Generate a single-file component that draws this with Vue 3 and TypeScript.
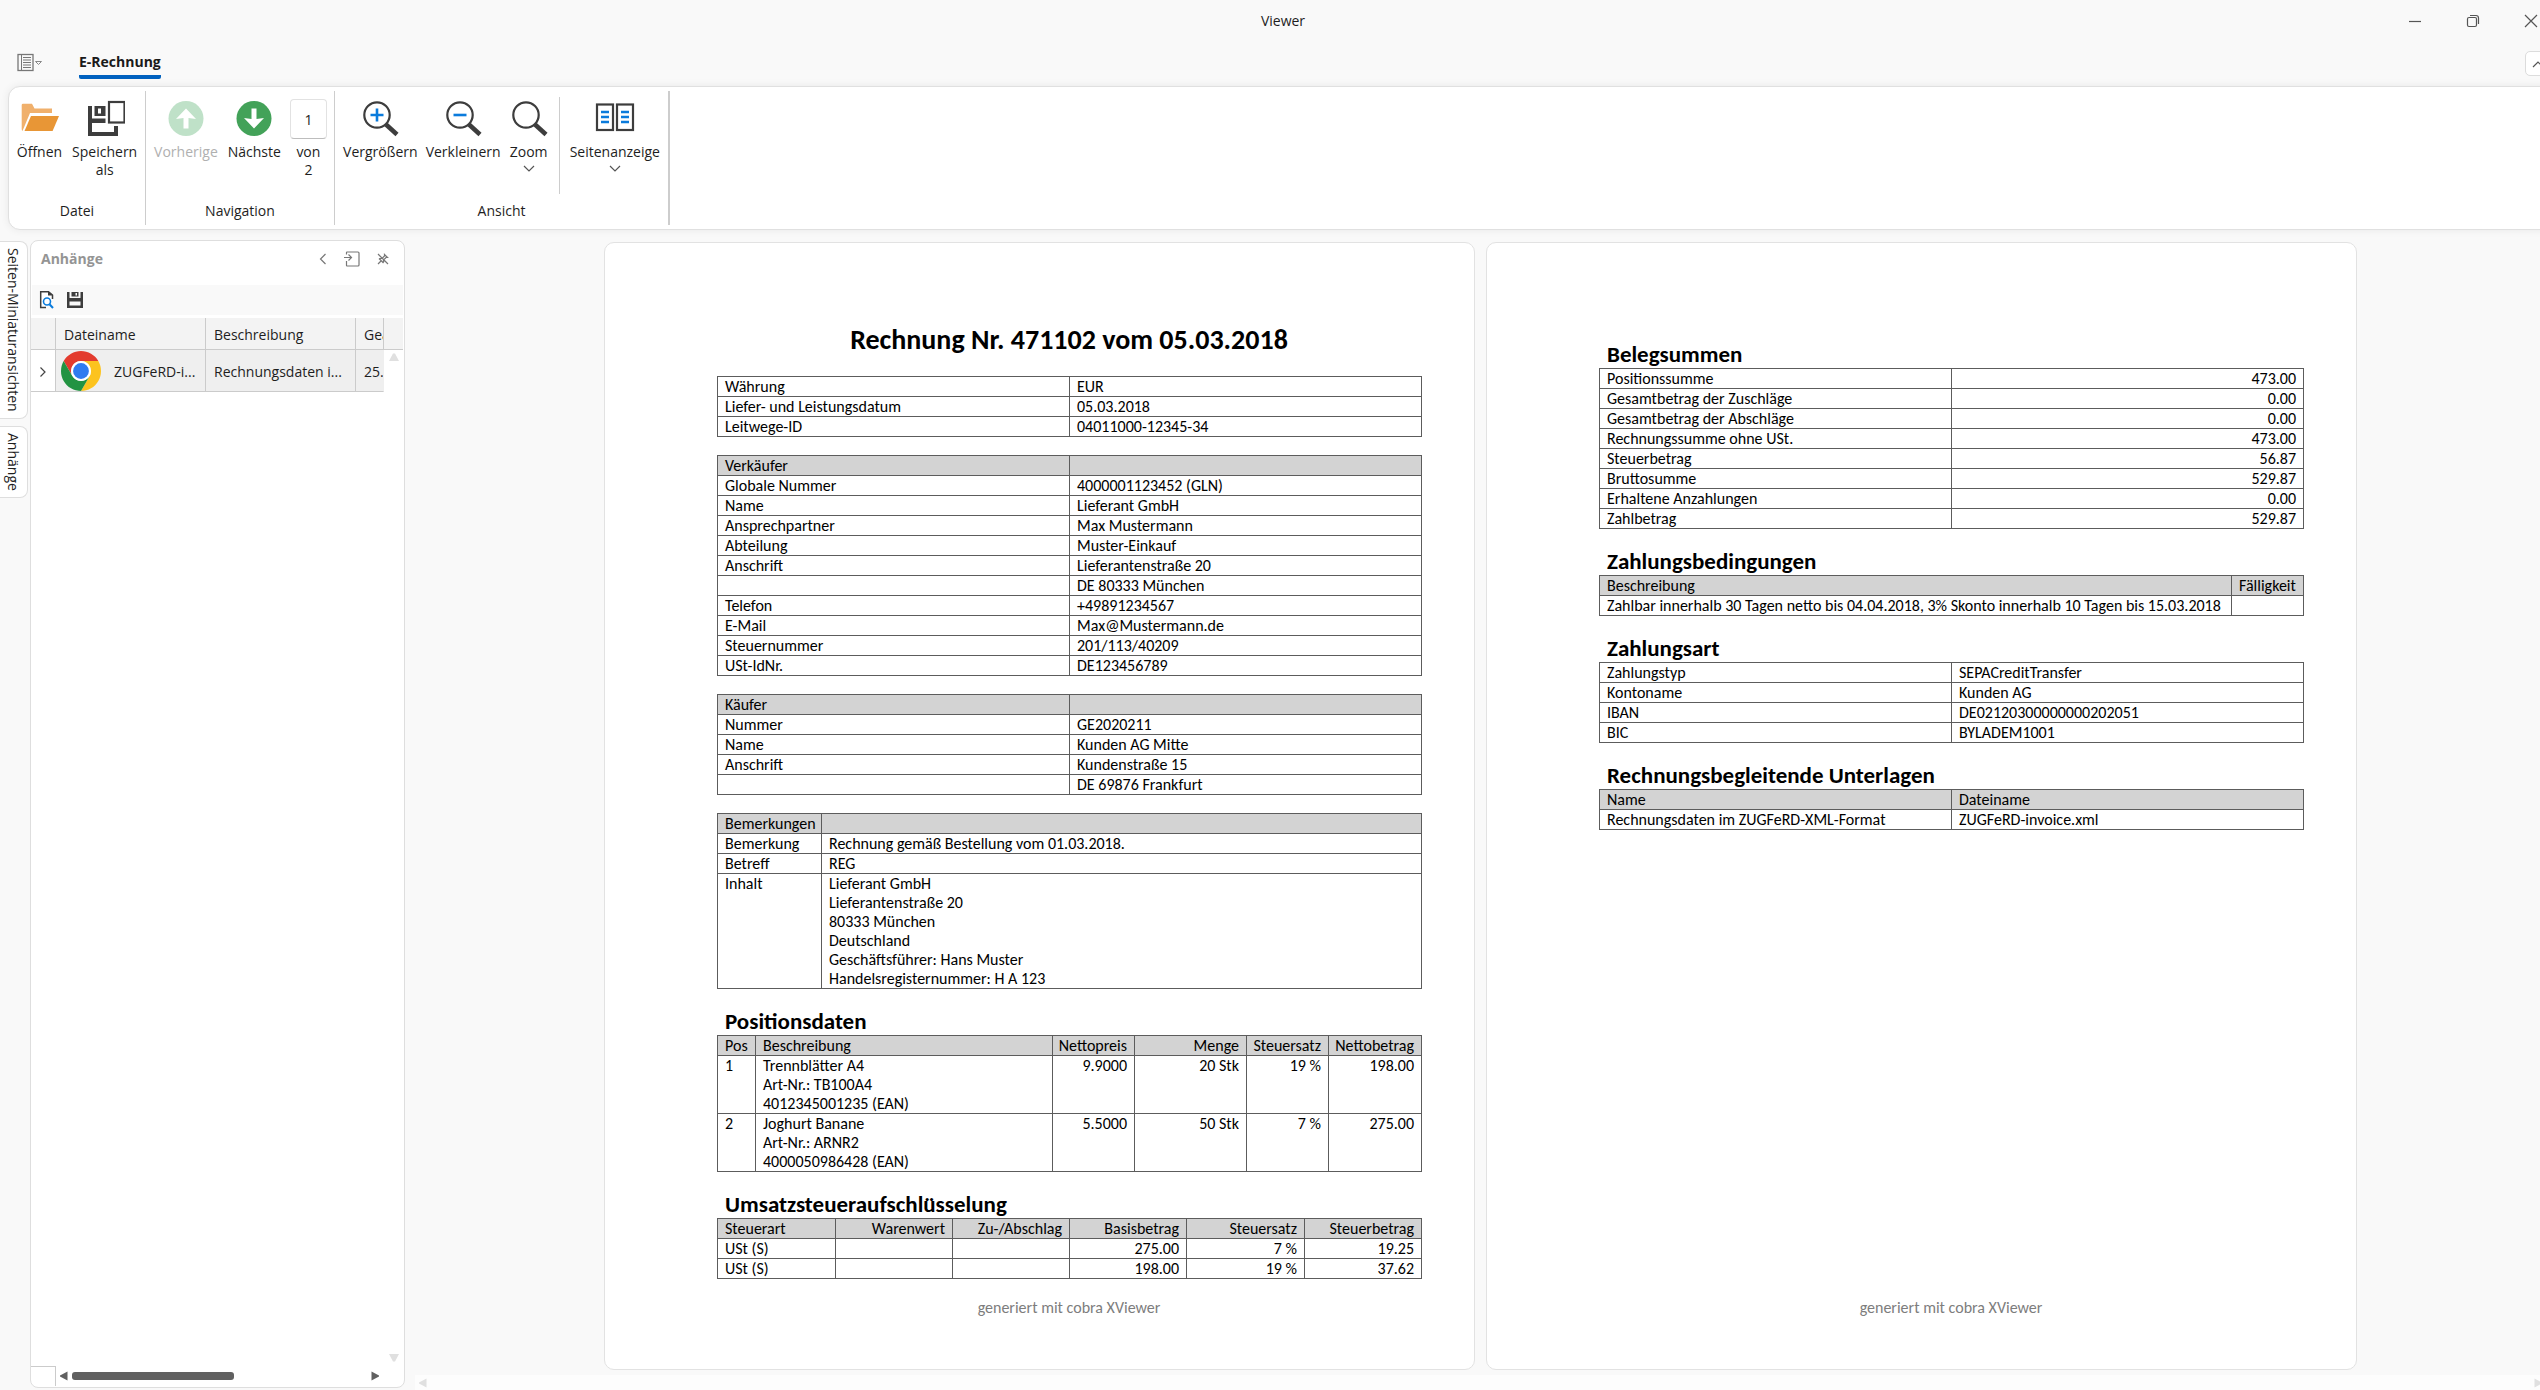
<script setup lang="ts">
import { ref } from 'vue'

interface Block {
  title?: string
  cols: number[]
  head?: string[]
  rows: string[][]
  right?: number[]
}

const pageNumber = ref('1')

const pageOne: Block[] = [
  {
    cols: [352, 352],
    rows: [
      ['Währung', 'EUR'],
      ['Liefer- und Leistungsdatum', '05.03.2018'],
      ['Leitwege-ID', '04011000-12345-34'],
    ],
  },
  {
    cols: [352, 352],
    head: ['Verkäufer', ''],
    rows: [
      ['Globale Nummer', '4000001123452 (GLN)'],
      ['Name', 'Lieferant GmbH'],
      ['Ansprechpartner', 'Max Mustermann'],
      ['Abteilung', 'Muster-Einkauf'],
      ['Anschrift', 'Lieferantenstraße 20'],
      ['', 'DE 80333 München'],
      ['Telefon', '+49891234567'],
      ['E-Mail', 'Max@Mustermann.de'],
      ['Steuernummer', '201/113/40209'],
      ['USt-IdNr.', 'DE123456789'],
    ],
  },
  {
    cols: [352, 352],
    head: ['Käufer', ''],
    rows: [
      ['Nummer', 'GE2020211'],
      ['Name', 'Kunden AG Mitte'],
      ['Anschrift', 'Kundenstraße 15'],
      ['', 'DE 69876 Frankfurt'],
    ],
  },
  {
    cols: [104, 600],
    head: ['Bemerkungen', ''],
    rows: [
      ['Bemerkung', 'Rechnung gemäß Bestellung vom 01.03.2018.'],
      ['Betreff', 'REG'],
      [
        'Inhalt',
        'Lieferant GmbH\nLieferantenstraße 20\n80333 München\nDeutschland\nGeschäftsführer: Hans Muster\nHandelsregisternummer: H A 123',
      ],
    ],
  },
  {
    title: 'Positionsdaten',
    cols: [38, 297, 82, 112, 82, 93],
    head: ['Pos', 'Beschreibung', 'Nettopreis', 'Menge', 'Steuersatz', 'Nettobetrag'],
    rows: [
      ['1', 'Trennblätter A4\nArt-Nr.: TB100A4\n4012345001235 (EAN)', '9.9000', '20 Stk', '19 %', '198.00'],
      ['2', 'Joghurt Banane\nArt-Nr.: ARNR2\n4000050986428 (EAN)', '5.5000', '50 Stk', '7 %', '275.00'],
    ],
    right: [2, 3, 4, 5],
  },
  {
    title: 'Umsatzsteueraufschlüsselung',
    cols: [118, 117, 117, 117, 118, 117],
    head: ['Steuerart', 'Warenwert', 'Zu-/Abschlag', 'Basisbetrag', 'Steuersatz', 'Steuerbetrag'],
    rows: [
      ['USt (S)', '', '', '275.00', '7 %', '19.25'],
      ['USt (S)', '', '', '198.00', '19 %', '37.62'],
    ],
    right: [1, 2, 3, 4, 5],
  },
]

const pageTwo: Block[] = [
  {
    title: 'Belegsummen',
    cols: [352, 352],
    rows: [
      ['Positionssumme', '473.00'],
      ['Gesamtbetrag der Zuschläge', '0.00'],
      ['Gesamtbetrag der Abschläge', '0.00'],
      ['Rechnungssumme ohne USt.', '473.00'],
      ['Steuerbetrag', '56.87'],
      ['Bruttosumme', '529.87'],
      ['Erhaltene Anzahlungen', '0.00'],
      ['Zahlbetrag', '529.87'],
    ],
    right: [1],
  },
  {
    title: 'Zahlungsbedingungen',
    cols: [632, 72],
    head: ['Beschreibung', 'Fälligkeit'],
    rows: [['Zahlbar innerhalb 30 Tagen netto bis 04.04.2018, 3% Skonto innerhalb 10 Tagen bis 15.03.2018', '']],
  },
  {
    title: 'Zahlungsart',
    cols: [352, 352],
    rows: [
      ['Zahlungstyp', 'SEPACreditTransfer'],
      ['Kontoname', 'Kunden AG'],
      ['IBAN', 'DE02120300000000202051'],
      ['BIC', 'BYLADEM1001'],
    ],
  },
  {
    title: 'Rechnungsbegleitende Unterlagen',
    cols: [352, 352],
    head: ['Name', 'Dateiname'],
    rows: [['Rechnungsdaten im ZUGFeRD-XML-Format', 'ZUGFeRD-invoice.xml']],
  },
]

const pages: { title?: string; blocks: Block[] }[] = [
  { title: 'Rechnung Nr. 471102 vom 05.03.2018', blocks: pageOne },
  { blocks: pageTwo },
]
</script>

<template>
  <div class="app">
    <header class="titlebar">
      <span class="wintitle">Viewer</span>
      <div class="winbuttons">
        <button type="button" aria-label="Minimieren">
          <svg width="14" height="14" viewBox="0 0 14 14"><path d="M1 7.5H13" class="win" /></svg>
        </button>
        <button type="button" aria-label="Wiederherstellen">
          <svg width="14" height="14" viewBox="0 0 14 14">
            <rect x="1.5" y="3.5" width="9" height="9" rx="1.5" class="win" />
            <path d="M4 1.5H10Q12.500 1.500 12.500 4V10" class="win" />
          </svg>
        </button>
        <button type="button" aria-label="Schließen">
          <svg width="14" height="14" viewBox="0 0 14 14"><path d="M1 1L13 13M13 1L1 13" class="win" /></svg>
        </button>
      </div>
    </header>

    <nav class="tabbar">
      <button type="button" class="filemenu" aria-label="Menü">
        <svg width="26" height="20" viewBox="0 0 26 20">
          <rect x="1" y="1.500" width="15" height="16" fill="none" stroke="#777" stroke-width="1.300" />
          <path d="M4.500 2V17" stroke="#777" fill="none" />
          <path d="M6 4.500H14M6 7H14M6 9.500H14M6 12H14M6 14.500H14" stroke="#777" fill="none" />
          <path d="M18.500 8.500H24.500L21.500 11.500Z" stroke="#888" fill="none" />
        </svg>
      </button>
      <a href="#" class="tab">E-Rechnung</a>
      <button type="button" class="collapse" aria-label="Menüband reduzieren">
        <svg width="12" height="8" viewBox="0 0 12 8"><path d="M1 7L6 2L11 7" class="win" /></svg>
      </button>
    </nav>

    <section class="ribbon">
      <div class="group datei">
        <div class="items">
          <button type="button" class="item">
            <svg width="40" height="40" viewBox="0 0 40 40">
              <path d="M2.700 6Q2.700 4.700 4 4.700H13L15.500 9.500H33V14H11L3.500 32Q2.700 31.500 2.700 30Z" fill="#f0b06c" />
              <path d="M12 17H40L33.600 32H5.500Z" fill="#e89636" />
            </svg>
            <span>Öffnen</span>
          </button>
          <button type="button" class="item">
            <svg width="40" height="40" viewBox="0 0 40 40">
              <path d="M3 7H7V33H29V27H33V37H3Z" fill="#3d3d3d" />
              <path d="M9.500 7H20.500V17H9.500ZM13 9.500V14.500H16V9.500Z" fill="#3d3d3d" fill-rule="evenodd" />
              <rect x="3" y="19.500" width="17.500" height="4.500" fill="#3d3d3d" />
              <rect x="24" y="3" width="15.500" height="20.500" fill="#fff" stroke="#3d3d3d" stroke-width="2.200" />
            </svg>
            <span>Speichern<br />als</span>
          </button>
        </div>
        <span class="caption">Datei</span>
      </div>

      <div class="group navi">
        <div class="items">
          <button type="button" class="item" disabled>
            <svg width="40" height="40" viewBox="0 0 40 40">
              <circle cx="20" cy="19.500" r="17.500" fill="#bfe1c8" />
              <path d="M17.500 29.500H22.500V19L30 20L20 9.500L10 20L17.500 19Z" fill="#fff" />
            </svg>
            <span>Vorherige</span>
          </button>
          <button type="button" class="item">
            <svg width="40" height="40" viewBox="0 0 40 40">
              <circle cx="20" cy="19.500" r="17.500" fill="#43a259" />
              <path d="M17.500 9.500H22.500V20L30 19L20 29.500L10 19L17.500 20Z" fill="#fff" />
            </svg>
            <span>Nächste</span>
          </button>
          <label class="item pagebox">
            <input v-model="pageNumber" type="text" />
            <span>von<br />2</span>
          </label>
        </div>
        <span class="caption">Navigation</span>
      </div>

      <div class="group ansicht">
        <div class="items">
          <button type="button" class="item">
            <svg width="40" height="40" viewBox="0 0 40 40">
              <path d="M26 25.500L37 35.500" stroke="#3d3d3d" stroke-width="4.500" />
              <circle cx="17" cy="16" r="12.700" fill="#fff" stroke="#3d3d3d" stroke-width="2.200" />
              <path d="M10.500 16H23.500M17 9.500V22.500" stroke="#0a7bdc" stroke-width="2.600" />
            </svg>
            <span>Vergrößern</span>
          </button>
          <button type="button" class="item">
            <svg width="40" height="40" viewBox="0 0 40 40">
              <path d="M26 25.500L37 35.500" stroke="#3d3d3d" stroke-width="4.500" />
              <circle cx="17" cy="16" r="12.700" fill="#fff" stroke="#3d3d3d" stroke-width="2.200" />
              <path d="M10.500 16H23.500" stroke="#0a7bdc" stroke-width="2.600" />
            </svg>
            <span>Verkleinern</span>
          </button>
          <button type="button" class="item">
            <svg width="40" height="40" viewBox="0 0 40 40">
              <path d="M26 25.500L37 35.500" stroke="#3d3d3d" stroke-width="4.500" />
              <circle cx="17" cy="16" r="12.700" fill="#fff" stroke="#3d3d3d" stroke-width="2.200" />
            </svg>
            <span>Zoom</span>
            <svg width="12" height="18" viewBox="0 0 12 18"><path d="M1 5L6 10L11 5" class="win" /></svg>
          </button>
          <span class="divider"></span>
          <button type="button" class="item">
            <svg width="40" height="40" viewBox="0 0 40 40">
              <rect x="2" y="5.500" width="16" height="25.500" fill="none" stroke="#3d3d3d" stroke-width="2.200" />
              <rect x="22" y="5.500" width="16" height="25.500" fill="none" stroke="#3d3d3d" stroke-width="2.200" />
              <path d="M6 13H14M6 18H14M6 23H14M26 13H34M26 18H34M26 23H34" stroke="#0a7bdc" stroke-width="2.400" />
            </svg>
            <span>Seitenanzeige</span>
            <svg width="12" height="18" viewBox="0 0 12 18"><path d="M1 5L6 10L11 5" class="win" /></svg>
          </button>
        </div>
        <span class="caption">Ansicht</span>
      </div>
    </section>

    <main class="body">
      <div class="sidetabs">
        <button type="button">Seiten-Miniaturansichten</button>
        <button type="button">Anhänge</button>
      </div>

      <aside class="panel">
        <div class="panelhead">
          <h2>Anhänge</h2>
          <button type="button" aria-label="Zurück">
            <svg width="8" height="12" viewBox="0 0 8 12"><path d="M6.500 1L1.500 6L6.500 11" class="soft" /></svg>
          </button>
          <button type="button" aria-label="Andocken">
            <svg width="16" height="16" viewBox="0 0 16 16">
              <path d="M2.500 3.500V1.500Q2.500 1 3 1H14Q15 1 15 2V14Q15 15 14 15H3Q2.500 15 2.500 14.500V10" class="soft" />
              <path d="M0 6.500H7.500M4.500 3.500L7.500 6.500L4.500 9.500" class="soft" />
            </svg>
          </button>
          <button type="button" aria-label="Lösen">
            <svg width="12" height="12" viewBox="0 0 12 12">
              <path d="M1 1L11 11M1 11L4 8M2 5.500L6.500 10M2.500 5.500H5L7.500 3V1.500L10.500 4.500H9L6.500 7V9.500" class="soft" />
            </svg>
          </button>
        </div>

        <div class="paneltools">
          <button type="button" aria-label="Vorschau">
            <svg width="16" height="20" viewBox="0 0 16 20">
              <path d="M13.500 9V5L9.500 1.700H1.700V17.500H7" fill="#fff" stroke="#3d3d3d" stroke-width="1.500" />
              <path d="M9 1V5.500H14Z" fill="#3d3d3d" />
              <circle cx="8" cy="11.500" r="3.500" fill="#fff" stroke="#0a7bdc" stroke-width="1.600" />
              <path d="M10.500 14.200L14 18" stroke="#0a7bdc" stroke-width="2" />
            </svg>
          </button>
          <button type="button" aria-label="Speichern">
            <svg width="16" height="16" viewBox="0 0 16 16">
              <path d="M0 0H2.500V6H13.500V0H16V16H0ZM2.500 9.500V13.500H13.500V9.500Z" fill="#3d3d3d" fill-rule="evenodd" />
              <path d="M4.500 0H11.500V4.500H4.500ZM8.500 1V3.500H10V1Z" fill="#3d3d3d" fill-rule="evenodd" />
            </svg>
          </button>
        </div>

        <div class="grid">
          <div class="gridclip">
            <table>
              <colgroup><col class="c1" /><col class="c2" /><col class="c2" /><col class="c3" /></colgroup>
              <thead>
                <tr><th></th><th scope="col">Dateiname</th><th scope="col">Beschreibung</th><th scope="col">Geändert</th></tr>
              </thead>
              <tbody>
                <tr>
                  <td class="expand">
                    <svg width="6" height="10" viewBox="0 0 6 10"><path d="M.5 .5L5 5L.5 9.500" fill="none" stroke="#444" stroke-width="1.200" /></svg>
                  </td>
                  <td>
                    <span class="file">
                      <svg width="40" height="40" viewBox="0 0 48 48">
                        <path d="M3.220 12A24 24 0 0 1 44.780 12H24A12 12 0 0 0 13.610 30Z" fill="#e33b2e" />
                        <path d="M44.780 12A24 24 0 0 1 24 48L34.390 30A12 12 0 0 0 24 12Z" fill="#fcc31e" />
                        <path d="M24 48A24 24 0 0 1 3.220 12L13.610 30A12 12 0 0 0 34.390 30Z" fill="#229342" />
                        <circle cx="24" cy="24" r="12" fill="#fff" />
                        <circle cx="24" cy="24" r="9.500" fill="#2f7bf0" />
                      </svg>
                      <span>ZUGFeRD-i...</span>
                    </span>
                  </td>
                  <td>Rechnungsdaten i...</td>
                  <td class="cut">25.</td>
                </tr>
              </tbody>
            </table>
          </div>
          <div class="vscroll">
            <span class="corner"></span>
            <svg width="10" height="8" viewBox="0 0 10 8"><path d="M0 8L4 .5H6L10 8Z" fill="#e0e0e0" /></svg>
            <svg class="down" width="10" height="8" viewBox="0 0 10 8"><path d="M0 0L4 7.500H6L10 0Z" fill="#e0e0e0" /></svg>
          </div>
        </div>

        <div class="hscroll">
          <span class="box"></span>
          <svg width="8" height="10" viewBox="0 0 8 10"><path d="M7.500 .5V9.500L0 5.500V4.500Z" fill="#606060" /></svg>
          <span class="thumb"></span>
          <svg class="end" width="8" height="10" viewBox="0 0 8 10"><path d="M.5 .5V9.500L8 5.500V4.500Z" fill="#606060" /></svg>
        </div>
      </aside>

      <div class="viewer">
        <div class="pages">
          <article v-for="(page, p) in pages" :key="p" class="page">
            <h1 v-if="page.title">{{ page.title }}</h1>
            <template v-for="(block, b) in page.blocks" :key="b">
              <h3 v-if="block.title">{{ block.title }}</h3>
              <div v-else-if="b > 0" class="space"></div>
              <table class="doc">
                <colgroup><col v-for="(w, c) in block.cols" :key="c" :style="{ width: w + 'px' }" /></colgroup>
                <thead v-if="block.head">
                  <tr>
                    <th v-for="(cell, c) in block.head" :key="c" scope="col" :class="{ right: block.right?.includes(c) }">{{ cell }}</th>
                  </tr>
                </thead>
                <tbody>
                  <tr v-for="(row, r) in block.rows" :key="r">
                    <td v-for="(cell, c) in row" :key="c" :class="{ right: block.right?.includes(c) }">{{ cell }}</td>
                  </tr>
                </tbody>
              </table>
            </template>
            <footer>generiert mit cobra XViewer</footer>
          </article>
        </div>
        <div class="mainscroll">
          <svg width="8" height="10" viewBox="0 0 8 10"><path d="M7.500 .5V9.500L0 5.500V4.500Z" fill="#e0e0e0" /></svg>
          <svg width="8" height="10" viewBox="0 0 8 10"><path d="M.5 .5V9.500L8 5.500V4.500Z" fill="#e0e0e0" /></svg>
        </div>
      </div>
    </main>
  </div>
</template>

<style>
body {
  margin: 0;
  overflow: hidden;
  background: #f9f9f9;
}
</style>

<style scoped>
.app {
  display: flex;
  flex-direction: column;
  box-sizing: border-box;
  width: calc(100% + 26px);
  height: 100vh;
  background: #f9f9f9;
  color: #1e1e1e;
  font: 14px/18px "Open Sans", "Noto Sans", sans-serif;
}
button {
  padding: 0;
  border: 0;
  background: none;
  color: inherit;
  font: inherit;
}
svg {
  display: block;
  flex: none;
}
.win {
  fill: none;
  stroke: #555;
  stroke-width: 1.2;
}
.soft {
  fill: none;
  stroke: #777;
  stroke-width: 1.2;
}

.titlebar {
  display: grid;
  grid-template-columns: 1fr auto 1fr;
  align-items: center;
  height: 41px;
}
.wintitle {
  grid-column: 2;
}
.winbuttons {
  display: flex;
  justify-content: flex-end;
  padding-right: 6px;
}
.winbuttons button {
  display: flex;
  align-items: center;
  justify-content: center;
  width: 58px;
  height: 40px;
}

.tabbar {
  display: flex;
  align-items: flex-start;
  height: 44px;
}
.filemenu {
  margin: 12px 36px 0 17px;
}
.tab {
  padding: 11px 0 3px;
  border-bottom: 4px solid #0061bf;
  border-radius: 2px;
  color: #1a1a1a;
  font-weight: 700;
  line-height: 20px;
  text-decoration: none;
}
.collapse {
  display: flex;
  align-items: center;
  justify-content: center;
  width: 25px;
  height: 25px;
  margin: 10px 16px 0 auto;
  border: 1px solid #dcdcdc;
  border-radius: 5px;
  background: #fff;
}

.ribbon {
  display: flex;
  height: 142px;
  margin: 1px 0 0 8px;
  border: 1px solid #e0e0e0;
  border-radius: 12px;
  background: #fff;
  box-shadow: 0 0 8px rgba(0, 0, 0, 0.07);
}
.group {
  display: flex;
  flex-direction: column;
  align-items: center;
  justify-content: space-between;
  box-sizing: border-box;
  height: 134px;
  margin-top: 4px;
  padding: 8px 0 5px;
  border-right: 1px solid #cdcdcd;
}
.datei {
  width: 137px;
}
.navi {
  width: 189px;
}
.ansicht {
  width: 335px;
  border-right-width: 2px;
}
.items {
  display: flex;
  align-items: flex-start;
  height: 94px;
}
.item {
  display: flex;
  flex-direction: column;
  align-items: center;
  padding: 0 5px;
  text-align: center;
}
.ansicht .item {
  padding: 0 4px;
}
.item > svg:first-child {
  margin-bottom: 4px;
}
.item:disabled span {
  color: #b0b0b0;
}
.item.pagebox {
  padding: 0 4px;
}
.pagebox input {
  box-sizing: border-box;
  width: 37px;
  height: 40px;
  margin-bottom: 4px;
  padding: 0;
  border: 1px solid #e2e2e2;
  border-bottom-color: #bdbdbd;
  border-radius: 4px;
  background: #fff;
  color: inherit;
  font: inherit;
  text-align: center;
}
.divider {
  width: 1px;
  height: 97px;
  margin: -2px 6px 0;
  background: #cdcdcd;
}

.body {
  display: flex;
  flex: 1;
  min-height: 0;
  padding-top: 10px;
}
.sidetabs {
  display: flex;
  flex-direction: column;
  align-items: flex-start;
  gap: 7px;
  width: 30px;
  padding-top: 1px;
}
.sidetabs button {
  box-sizing: border-box;
  width: 28px;
  padding: 6px 1px 6px 0;
  border: 1px solid #dedede;
  border-left: 0;
  border-radius: 0 8px 8px 0;
  background: #fff;
  writing-mode: vertical-rl;
}
.panel {
  display: flex;
  flex-direction: column;
  box-sizing: border-box;
  width: 375px;
  margin-bottom: 2px;
  border: 1px solid #dedede;
  border-radius: 8px;
  background: #fff;
}
.panelhead {
  display: flex;
  align-items: center;
  gap: 17px;
  height: 36px;
  margin-bottom: 8px;
  padding: 0 15px 0 10px;
}
.panelhead h2 {
  flex: 1;
  margin: 0;
  color: #949494;
  font-size: 14px;
  font-weight: 700;
}
.paneltools {
  display: flex;
  align-items: center;
  gap: 12px;
  height: 30px;
  margin: 0 1px 3px;
  padding-left: 7px;
  background: #f9f9f9;
}
.grid {
  display: flex;
  flex: 1;
}
.gridclip {
  width: 353px;
  overflow: hidden;
}
.gridclip table {
  width: 353px;
  border-collapse: separate;
  border-spacing: 0;
  table-layout: fixed;
}
.c1 {
  width: 25px;
}
.c2 {
  width: 150px;
}
.c3 {
  width: 28px;
}
.gridclip th,
.gridclip td {
  box-sizing: border-box;
  height: 32px;
  padding: 3px 0 0 8px;
  overflow: hidden;
  border-right: 1px solid #cbcbcb;
  border-bottom: 1px solid #cbcbcb;
  background: #f3f3f3;
  font-weight: 400;
  text-align: left;
  white-space: nowrap;
}
.gridclip td {
  height: 42px;
  background: #efefef;
}
.gridclip td.expand {
  padding-left: 9px;
  background: #fff;
}
.gridclip td.cut {
  border-right-color: #efefef;
}
.gridclip td:nth-child(2) {
  padding: 0 0 0 5px;
}
.file {
  display: flex;
  align-items: center;
  gap: 13px;
}
.file span {
  padding-top: 3px;
}
.vscroll {
  display: flex;
  flex: 1;
  flex-direction: column;
  align-items: center;
  padding-bottom: 3px;
}
.corner {
  box-sizing: border-box;
  align-self: stretch;
  height: 32px;
  margin: 0 1px 3px 0;
  border-bottom: 1px solid #cbcbcb;
  background: #f3f3f3;
}
.down {
  margin-top: auto;
}
.hscroll {
  display: flex;
  align-items: center;
  height: 21px;
  margin-bottom: 1px;
  padding-right: 25px;
}
.box {
  box-sizing: border-box;
  width: 25px;
  height: 20px;
  margin-right: 4px;
  border-top: 1px solid #cbcbcb;
  border-right: 1px solid #cbcbcb;
}
.thumb {
  width: 162px;
  height: 8px;
  margin-left: 4px;
  border-radius: 3px;
  background: #606060;
}
.end {
  margin-left: auto;
}

.viewer {
  display: flex;
  flex: 1;
  flex-direction: column;
  justify-content: space-between;
  min-width: 0;
  margin-left: 10px;
  padding: 2px 20px 0 0;
}
.pages {
  display: flex;
  justify-content: center;
  gap: 11px;
}
.page {
  display: flex;
  flex: none;
  flex-direction: column;
  box-sizing: border-box;
  width: 871px;
  height: 1128px;
  padding: 79px 53px 52px 112px;
  border: 1px solid #e2e2e2;
  border-radius: 10px;
  background: #fff;
  color: #000;
  font: 16px/19px Carlito, Calibri, Lato, sans-serif;
}
.page h1 {
  margin: 0 0 18px;
  font-size: 28px;
  font-weight: 700;
  line-height: 36px;
  text-align: center;
}
.page h3 {
  margin: 0;
  padding: 18px 8px 0;
  font-size: 23px;
  font-weight: 700;
  line-height: 28px;
}
.space {
  height: 18px;
}
.doc {
  width: 705px;
  border-collapse: collapse;
  table-layout: fixed;
}
.doc th,
.doc td {
  height: 19px;
  padding: 0 7px;
  border: 1px solid #5c5c5c;
  font-weight: 400;
  text-align: left;
  vertical-align: top;
  white-space: pre-line;
}
.doc th {
  background: #d3d3d3;
}
.doc .right {
  padding-left: 0;
  text-align: right;
}
.page footer {
  margin-top: auto;
  color: #7d7d7d;
  text-align: center;
}
.mainscroll {
  display: flex;
  align-items: center;
  justify-content: space-between;
  height: 15px;
  padding: 0 4px;
  background: #fdfdfd;
}
</style>
